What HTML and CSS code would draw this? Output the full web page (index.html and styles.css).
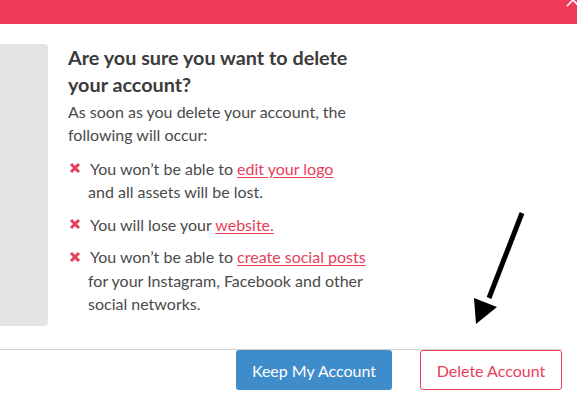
FILE: index.html
```html
<!DOCTYPE html>
<html>
<head>
<meta charset="utf-8">
<link rel="stylesheet" href="styles.css">
</head>
<body>
<div class="topbar">
  <svg class="close" width="14" height="14" viewBox="0 0 14 14"><path d="M1 13 L7 7 L13 13" stroke="#fff" stroke-width="1.6" fill="none"/></svg>
</div>
<div class="main">
  <div class="preview"></div>
  <div class="content">
    <h1 class="title">Are you sure you want to delete your account?</h1>
    <p class="intro">As soon as you delete your account, the following will occur:</p>
    <ul class="list">
      <li class="item"><svg class="xicon" viewBox="0 0 12 12"><path d="M2 2 L10 10 M10 2 L2 10" stroke="#e8405a" stroke-width="3" stroke-linecap="butt"/></svg>You won’t be able to <a class="link">edit your logo</a><br>and all assets will be lost.</li>
      <li class="item"><svg class="xicon" viewBox="0 0 12 12"><path d="M2 2 L10 10 M10 2 L2 10" stroke="#e8405a" stroke-width="3" stroke-linecap="butt"/></svg>You will lose your <a class="link">website.</a></li>
      <li class="item"><svg class="xicon" viewBox="0 0 12 12"><path d="M2 2 L10 10 M10 2 L2 10" stroke="#e8405a" stroke-width="3" stroke-linecap="butt"/></svg>You won’t be able to <a class="link">create social posts</a><br>for your Instagram, Facebook and other<br>social networks.</li>
    </ul>
  </div>
  <svg class="arrow" width="60" height="120" viewBox="0 0 60 120"><line x1="48" y1="3" x2="15" y2="88" stroke="#000" stroke-width="5"/><polygon points="0,88 23,97 2,114" fill="#000"/></svg>
</div>
<div class="footer">
  <button class="btn btn-keep">Keep My Account</button>
  <button class="btn btn-delete">Delete Account</button>
</div>
</body>
</html>
```
FILE: styles.css
```css
html, body {
  margin: 0;
  padding: 0;
  background: #fff;
  width: 577px;
  height: 400px;
  overflow: hidden;
  font-family: Lato, "Liberation Sans", sans-serif;
  color: #4a4a4a;
}
.topbar {
  height: 24px;
  background: #ef3b57;
  position: relative;
}
.close {
  position: absolute;
  right: -3px;
  top: -7px;
}
.main {
  position: relative;
  display: flex;
  padding-top: 20px;
  height: 305px;
}
.preview {
  width: 48px;
  height: 282px;
  background: #e4e4e4;
  border-radius: 0 4px 4px 0;
  flex: none;
}
.content {
  margin-left: 20px;
}
.title {
  margin: 0;
  font-size: 19.8px;
  line-height: 27px;
  font-weight: 700;
  color: #3b3b3b;
  width: 300px;
}
.intro {
  margin: 1.5px 0 0;
  font-size: 16px;
  line-height: 23px;
  width: 300px;
}
.list {
  list-style: none;
  margin: 11px 0 0;
  padding: 0;
}
.item {
  position: relative;
  font-size: 16px;
  line-height: 23.3px;
  padding-left: 20px;
  text-indent: 2px;
  margin-bottom: 9.5px;
}
.xicon {
  position: absolute;
  left: 1px;
  top: 5.5px;
  width: 12px;
  height: 12px;
}
.link {
  color: #e8405a;
  text-decoration: underline;
  text-underline-offset: 2px;
}
.arrow {
  position: absolute;
  left: 474px;
  top: 186px;
}
.footer {
  border-top: 1px solid #cfcfcf;
  width: 562px;
  display: flex;
  padding-left: 236px;
  box-sizing: border-box;
  gap: 28px;
}
.btn {
  height: 40px;
  font-family: Lato, "Liberation Sans", sans-serif;
  font-size: 16px;
  border-radius: 3px;
  padding: 0;
  margin: 0;
}
.btn-keep {
  width: 156px;
  background: #3f8ccb;
  color: #fff;
  border: none;
}
.btn-delete {
  width: 142px;
  background: #fff;
  color: #e8405a;
  border: 1px solid #e8405a;
}
```
